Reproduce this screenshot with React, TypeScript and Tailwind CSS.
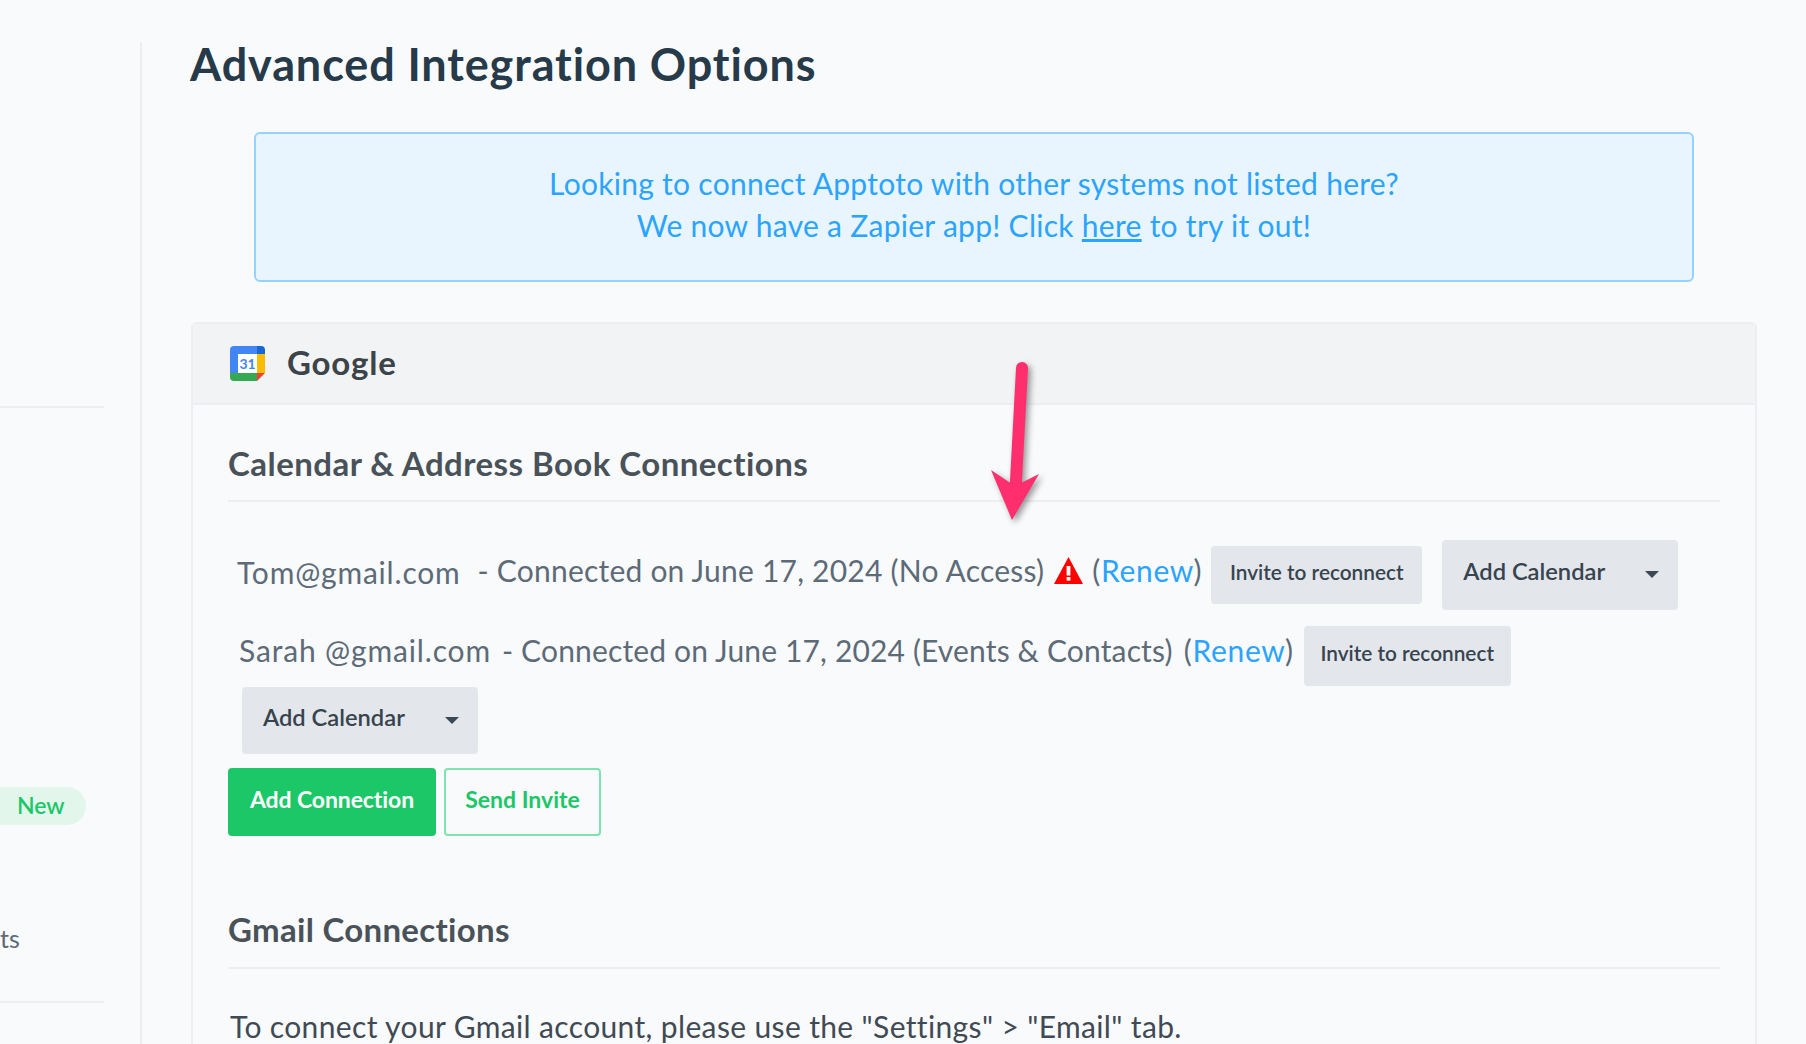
import React from "react";

function Caret() {
  return <span className="mt-[5px] inline-block h-0 w-0 border-x-[7px] border-t-[7px] border-x-transparent border-t-[#3a4754]" />;
}

function CalendarIcon() {
  return (
    <svg width="35" height="35" viewBox="0 0 35 35" className="shrink-0">
      <path d="M4 0H27V8H8V27H0V4A4 4 0 0 1 4 0Z" fill="#4285f4" />
      <path d="M27 0H31A4 4 0 0 1 35 4V8H27Z" fill="#1967d2" />
      <rect x="8" y="8" width="19" height="19" fill="#ffffff" />
      <rect x="27" y="8" width="8" height="19" fill="#fbbc04" />
      <path d="M0 27H27V35H4A4 4 0 0 1 0 31Z" fill="#34a853" />
      <path d="M27 27H35L27 35Z" fill="#ea4335" />
      <text x="17.5" y="23" textAnchor="middle" fontSize="14" fontWeight="700" fill="#4285f4" fontFamily="Lato, sans-serif">31</text>
    </svg>
  );
}

function WarningIcon() {
  return (
    <svg width="29" height="27" viewBox="0 0 29 27" className="mb-[10px] ml-[10px] shrink-0">
      <path d="M14.5 0 L29 27 H0 Z" fill="#ff0000" />
      <rect x="12.6" y="9" width="3.8" height="9.5" fill="#ffffff" />
      <rect x="12.6" y="20" width="3.8" height="3.6" fill="#ffffff" />
    </svg>
  );
}

function Arrow() {
  return (
    <svg width="70" height="175" viewBox="985 360 70 175" className="absolute left-[985px] top-[360px] drop-shadow-[3px_3px_3px_rgba(0,0,0,0.4)]">
      <path d="M1022 368 L1015.5 490" stroke="#ff2e6c" strokeWidth="12" strokeLinecap="round" fill="none" />
      <path d="M991 470 L1012 520 L1039 474 L1015 486 Z" fill="#ff2e6c" />
    </svg>
  );
}

function InviteButton({ cls }: { cls: string }) {
  return (
    <button className={`${cls} flex shrink-0 items-center justify-center rounded-[4px] bg-[#e3e6ea] pb-[6px] text-[20.8px] font-semibold text-[#37444f]`}>
      Invite to reconnect
    </button>
  );
}

function AddCalendar({ cls }: { cls: string }) {
  return (
    <button className={`${cls} flex w-[236px] shrink-0 items-center justify-between rounded-[4px] bg-[#e3e6ea] pb-[6px] pl-[21px] pr-[19px] text-[23.7px] font-semibold text-[#37444f]`}>
      <span>Add Calendar</span>
      <Caret />
    </button>
  );
}

function Renew() {
  return (
    <span className="whitespace-nowrap tracking-[0.7px]">
      (<span className="text-[#2ba4ff]">Renew</span>)
    </span>
  );
}

export default function App() {
  return (
    <div className="relative flex h-[1044px] overflow-hidden bg-[#f9fafc] font-['Lato',sans-serif]">
      <aside className="mt-[42px] w-[142px] shrink-0 border-r-2 border-[#eceef2] pt-[364px]">
        <div className="h-[2px] w-[104px] bg-[#eceef2]" />
        <div className="mt-[379px] flex h-[38px] w-[86px] items-center rounded-r-full bg-[#e3f6ec] pb-[2px] pl-[17px] text-[23px] font-semibold text-[#1cc768]">
          New
        </div>
        <div className="mt-[97px] h-[32px] text-[25px] leading-[32px] text-[#5c6b77]">ts</div>
        <div className="mt-[47px] h-[2px] w-[104px] bg-[#eceef2]" />
      </aside>

      <main className="ml-[49px] w-[1570px] shrink-0 pt-[36px]">
        <h1 className="-ml-[1px] text-[45px] font-bold leading-[56px] tracking-[0.88px] text-[#263a4a]">Advanced Integration Options</h1>

        <div className="ml-[63px] mt-[40px] flex h-[150px] w-[1440px] flex-col justify-center rounded-[6px] border-2 border-[#96d2ff] bg-[#e8f4fe] pb-[7px] text-center text-[30px] leading-[42px] tracking-[0.28px] text-[#2ba4ff]">
          <p>Looking to connect Apptoto with other systems not listed here?</p>
          <p>
            We now have a Zapier app! Click <span className="underline">here</span> to try it out!
          </p>
        </div>

        <section className="mt-[40px] h-[760px] w-[1566px] rounded-t-[6px] border-2 border-b-0 border-[#eceef2]">
          <header className="flex h-[81px] items-center border-b-2 border-[#eceef2] bg-[#f2f3f5] pl-[37px]">
            <CalendarIcon />
            <span className="mb-[2px] ml-[22px] text-[33px] font-bold tracking-[0.8px] text-[#3c4349]">Google</span>
          </header>

          <div className="pl-[35px] pr-[35px]">
            <h2 className="mt-[37px] border-b-2 border-[#eceef2] pb-[16px] text-[33px] font-bold leading-[42px] tracking-[0.45px] text-[#4a5259]">
              Calendar &amp; Address Book Connections
            </h2>

            <div className="mt-[38px] flex h-[70px] items-center pl-[9px] text-[30px] text-[#5c6b77]">
              <span className="shrink-0 whitespace-nowrap pb-[6px] tracking-[0.8px]">Tom@gmail.com</span>
              <span className="ml-[17px] whitespace-nowrap pb-[9px] tracking-[0.22px]">- Connected on June 17, 2024 (No Access)</span>
              <WarningIcon />
              <span className="ml-[9px] pb-[9px]">
                <Renew />
              </span>
              <InviteButton cls="ml-[9px] h-[58px] w-[211px]" />
              <AddCalendar cls="ml-[20px] h-[70px]" />
            </div>

            <div className="mt-[16px] flex h-[60px] items-center pl-[11px] text-[30px] text-[#5c6b77]">
              <span className="shrink-0 whitespace-nowrap pb-[12px] tracking-[0.85px]">Sarah @gmail.com</span>
              <span className="ml-[11px] whitespace-nowrap pb-[12px] tracking-[0.15px]">- Connected on June 17, 2024 (Events &amp; Contacts)</span>
              <span className="ml-[11px] pb-[12px]">
                <Renew />
              </span>
              <InviteButton cls="ml-[10px] h-[60px] w-[207px]" />
            </div>

            <AddCalendar cls="ml-[14px] mt-[1px] h-[67px]" />

            <div className="mt-[14px] flex gap-[8px]">
              <button className="flex h-[68px] w-[208px] items-center justify-center rounded-[4px] bg-[#1cc768] pb-[6px] text-[23px] font-bold tracking-[-0.1px] text-white">
                Add Connection
              </button>
              <button className="flex h-[68px] w-[157px] items-center justify-center rounded-[4px] border-2 border-[#7fe3ad] pb-[6px] text-[23px] font-bold text-[#1cc768]">
                Send Invite
              </button>
            </div>

            <h2 className="mt-[72px] border-b-2 border-[#eceef2] pb-[17px] text-[33px] font-bold leading-[42px] tracking-[0.3px] text-[#4a5259]">
              Gmail Connections
            </h2>
            <p className="ml-[2px] mt-[36px] whitespace-nowrap text-[30px] leading-[42px] tracking-[0.36px] text-[#3f4a54]">
              To connect your Gmail account, please use the "Settings" &gt; "Email" tab.
            </p>
          </div>
        </section>
      </main>

      <Arrow />
    </div>
  );
}
